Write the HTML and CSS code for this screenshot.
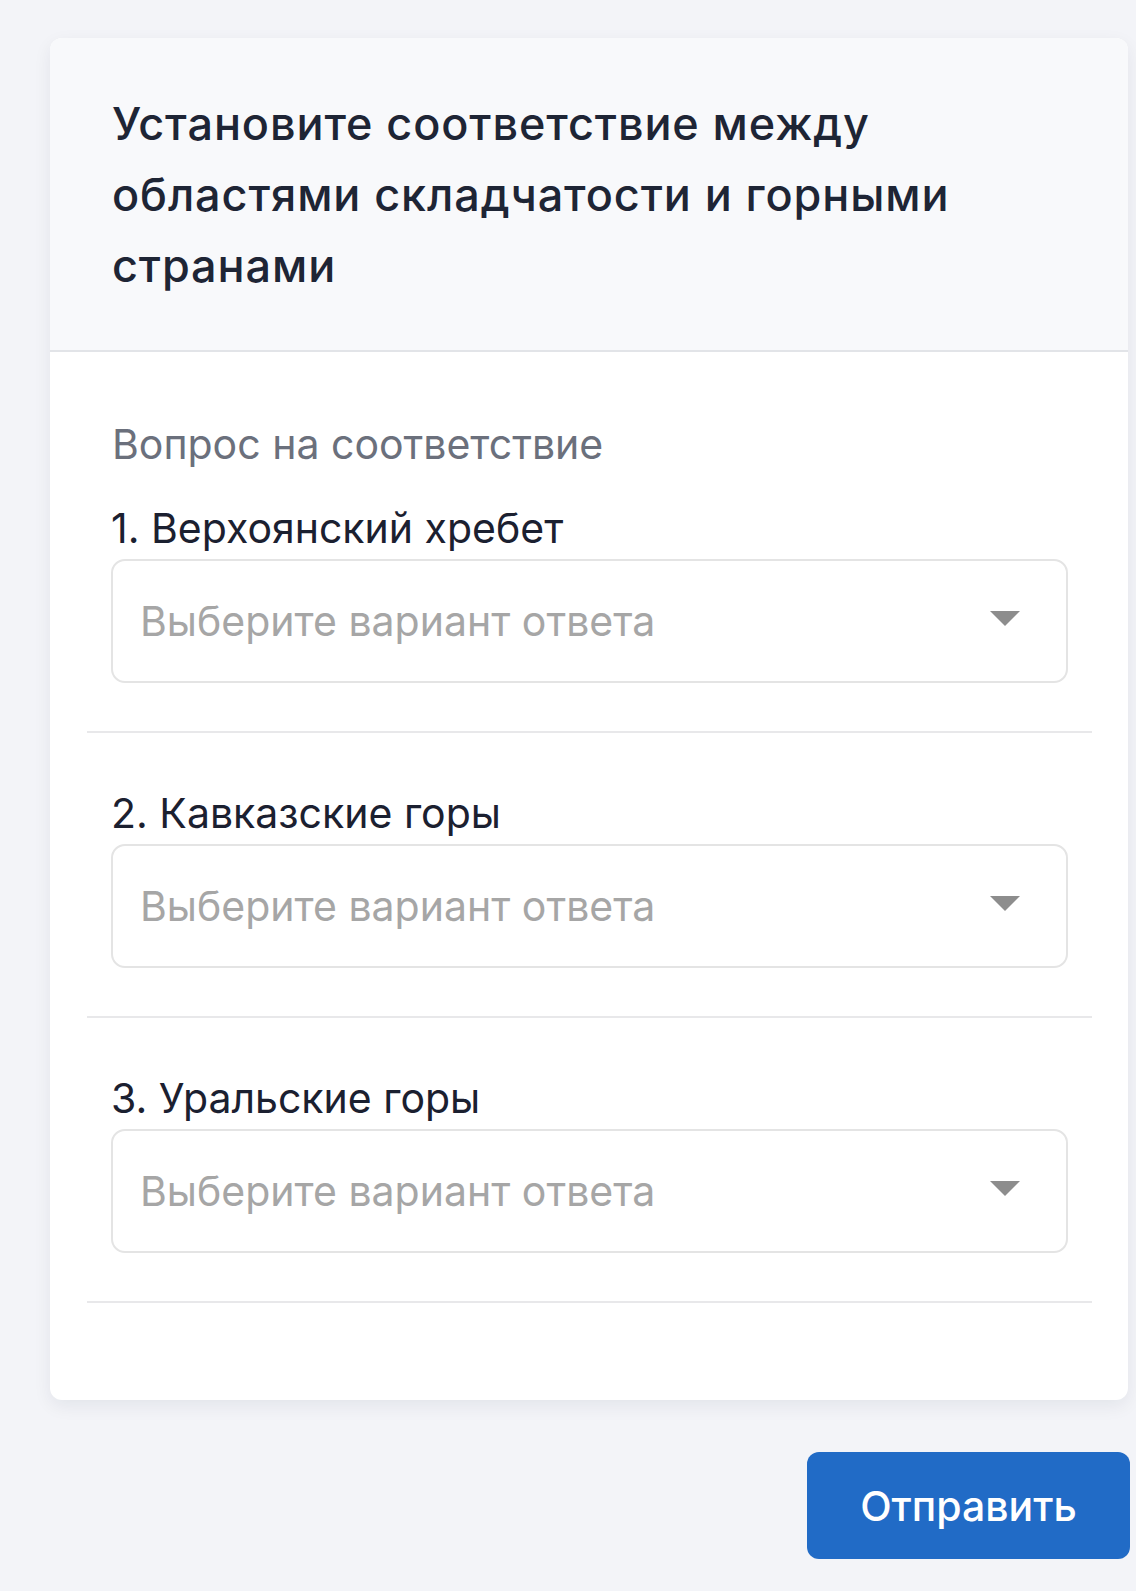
FILE: index.html
```html
<!DOCTYPE html>
<html lang="ru">
<head>
<meta charset="utf-8">
<title>Вопрос на соответствие</title>
<link rel="stylesheet" href="styles.css">
</head>
<body>
<main class="page">
  <section class="card">
    <header class="card-head">
      <h1 class="card-title">Установите соответствие между областями складчатости и горными странами</h1>
    </header>
    <div class="card-body">
      <p class="kind">Вопрос на соответствие</p>
      <div class="items">
        <div class="item">
          <div class="item-label">1. Верхоянский хребет</div>
          <div class="select">
            <span class="placeholder">Выберите вариант ответа</span>
            <span class="caret"></span>
          </div>
        </div>
        <div class="item">
          <div class="item-label">2. Кавказские горы</div>
          <div class="select">
            <span class="placeholder">Выберите вариант ответа</span>
            <span class="caret"></span>
          </div>
        </div>
        <div class="item">
          <div class="item-label">3. Уральские горы</div>
          <div class="select">
            <span class="placeholder">Выберите вариант ответа</span>
            <span class="caret"></span>
          </div>
        </div>
      </div>
    </div>
  </section>
  <div class="actions">
    <button class="submit" type="button">Отправить</button>
  </div>
</main>
</body>
</html>
```
FILE: styles.css
```css
html, body {
  margin: 0;
  padding: 0;
}

body {
  background: #f3f4f8;
  font-family: Inter, "Noto Sans", "Liberation Sans", sans-serif;
  color: #1b2030;
}

.page {
  padding: 38px 6px 0 50px;
}

.card {
  margin-right: 2px;
  background: #ffffff;
  border-radius: 12px;
  box-shadow: 0 6px 18px rgba(20, 30, 60, 0.07);
}

.card-head {
  background: #f8f9fb;
  border-radius: 12px 12px 0 0;
  border-bottom: 2px solid #e2e4e8;
  padding: 50px 60px 49px 62px;
}

.card-title {
  margin: 0;
  font-size: 45px;
  line-height: 71px;
  font-weight: 550;
  letter-spacing: 0.9px;
  color: #1e2535;
}

.card-body {
  padding: 67px 36px 97px 37px;
}

.kind {
  margin: 0 0 34px 25px;
  font-size: 41px;
  line-height: 50px;
  color: #6b707c;
}

.item {
  padding: 55px 24px 48px;
  border-bottom: 2px solid #e8e8ea;
}

.item:first-child {
  padding-top: 0;
}

.item-label {
  font-size: 41px;
  line-height: 50px;
  color: #1b2030;
  margin-bottom: 6px;
}

.select {
  height: 124px;
  box-sizing: border-box;
  border: 2px solid #e4e4e4;
  border-radius: 14px;
  display: flex;
  align-items: center;
  justify-content: space-between;
  padding: 0 46px 0 27px;
}

.placeholder {
  font-size: 41px;
  line-height: 50px;
  color: #a6a6a6;
}

.caret {
  width: 0;
  height: 0;
  border-left: 15px solid transparent;
  border-right: 15px solid transparent;
  border-top: 15px solid #8d8d8d;
  margin-top: -6px;
}

.actions {
  display: flex;
  justify-content: flex-end;
  padding-top: 52px;
}

.submit {
  width: 323px;
  height: 107px;
  border: none;
  border-radius: 12px;
  background: #216bc6;
  color: #ffffff;
  font-family: inherit;
  font-size: 41px;
  font-weight: 500;
}
```
